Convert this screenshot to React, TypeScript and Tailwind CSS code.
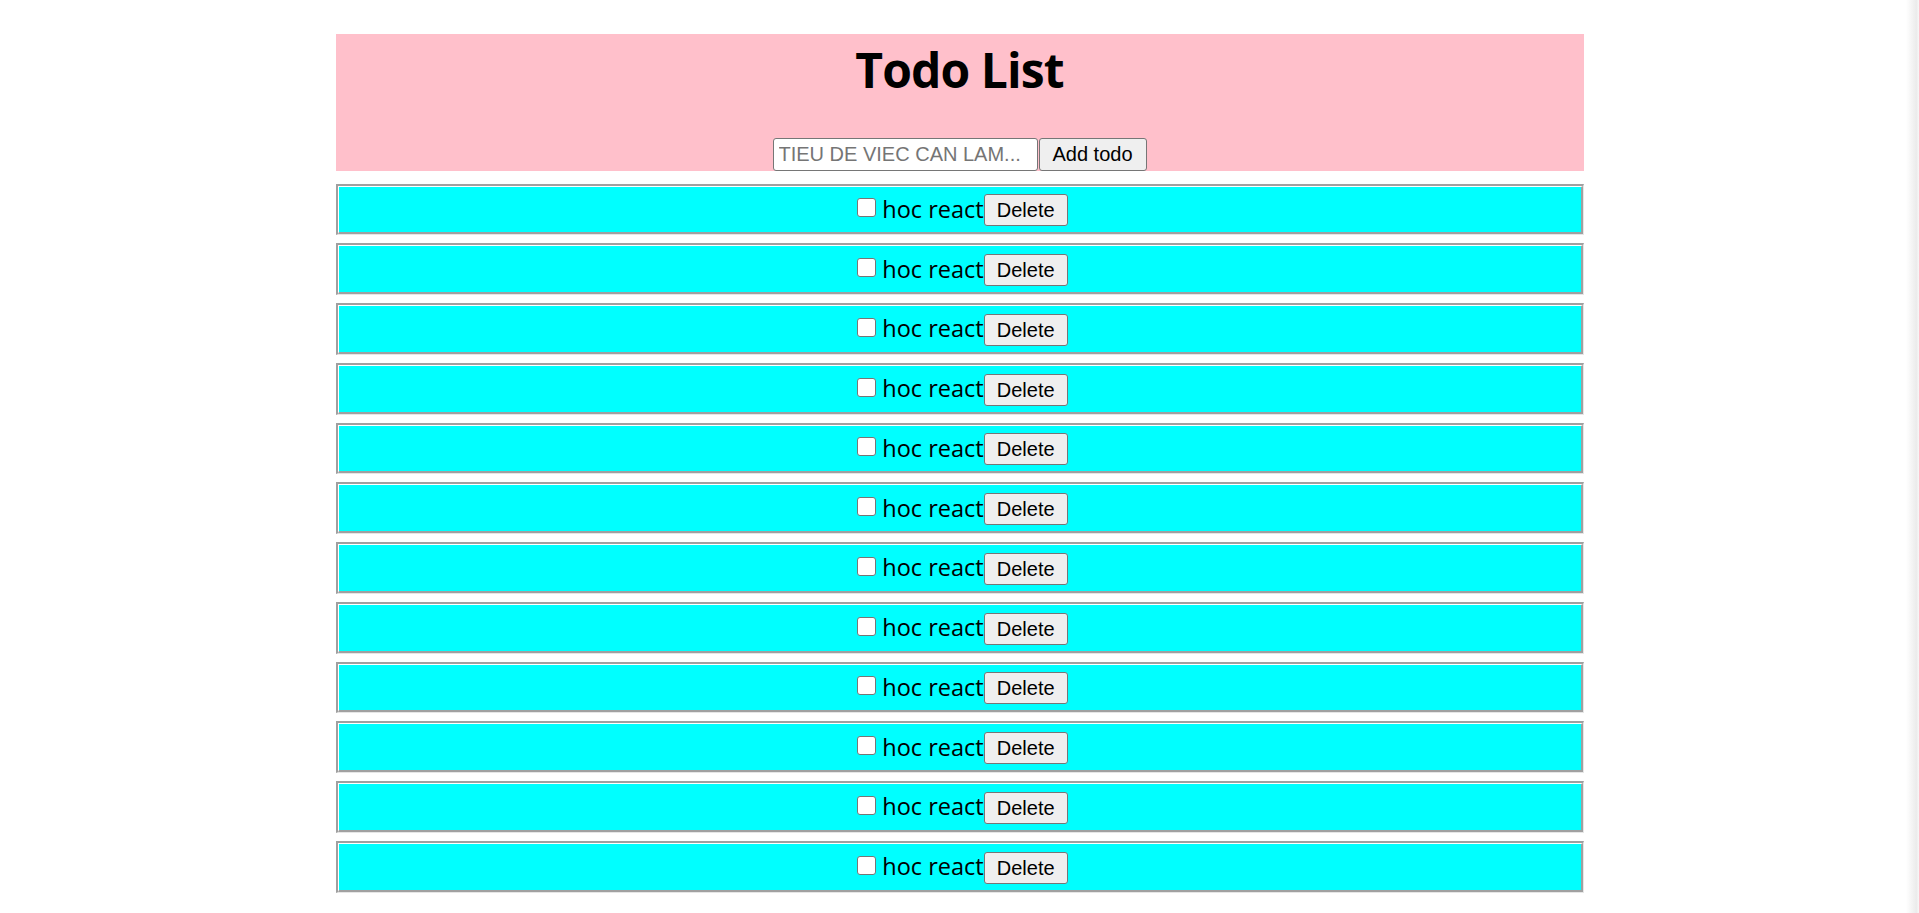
import React, { useState } from "react";

type Todo = { id: number; title: string; done: boolean };

const initialTodos: Todo[] = Array.from({ length: 12 }, (_, i) => ({
  id: i + 1,
  title: "hoc react",
  done: false,
}));

function TodoRow({ todo, onToggle, onDelete }: { todo: Todo; onToggle: () => void; onDelete: () => void }) {
  return (
    // groove-like frame: dark outer top/left, light outer bottom/right
    <div className="h-[51.75px] border-t-2 border-l-2 border-b border-r border-t-[#a0a0a0] border-l-[#a0a0a0] border-b-[#e6e6e6] border-r-[#e6e6e6]">
      <div className="h-full border-t border-l border-b-2 border-r-2 border-t-white border-l-white border-b-[#a0a0a0] border-r-[#a0a0a0] bg-[#00ffff] flex items-center justify-center">
        <input
          type="checkbox"
          checked={todo.done}
          onChange={onToggle}
          className="appearance-none w-[19px] h-[19px] ml-[6px] mr-[6px] mb-[3px] border-[1.5px] border-[#767676] rounded-[3px] bg-white checked:bg-[#0075ff]"
        />
        <span className="text-[23.5px] text-black">{todo.title}</span>
        <button
          onClick={onDelete}
          className="w-[84px] h-[32px] mt-[2px] bg-[#efefef] border-[1.5px] border-[#767676] rounded-[3px] text-[20px] text-black font-['Liberation_Sans',Arial,sans-serif]"
        >
          Delete
        </button>
      </div>
    </div>
  );
}

export default function App() {
  const [todos, setTodos] = useState<Todo[]>(initialTodos);
  const [title, setTitle] = useState("");

  const addTodo = () => {
    if (!title.trim()) return;
    setTodos([...todos, { id: Date.now(), title, done: false }]);
    setTitle("");
  };

  return (
    <div className="min-h-screen bg-white font-['Open_Sans','Noto_Sans',sans-serif] text-black">
      <div className="mx-auto w-[1248px] pt-[34px] pb-[20px]">
        <div className="h-[137px] bg-[#ffc0cb] flex flex-col items-center">
          <h1 className="mt-[8px] text-[48px] leading-[56px] font-bold tracking-[-0.9px]">Todo List</h1>
          <div className="mt-auto flex">
            <input
              value={title}
              onChange={(e) => setTitle(e.target.value)}
              placeholder="TIEU DE VIEC CAN LAM..."
              className="w-[265px] h-[33.5px] border-[1.5px] border-[#767676] rounded-[3px] bg-white px-[5px] text-[20px] font-['Liberation_Sans',Arial,sans-serif] placeholder:text-[#757575] outline-none"
            />
            <button
              onClick={addTodo}
              className="w-[108px] h-[33.5px] ml-[1px] bg-[#efefef] border-[1.5px] border-[#767676] rounded-[3px] text-[20px] font-['Liberation_Sans',Arial,sans-serif]"
            >
              Add todo
            </button>
          </div>
        </div>

        <div className="mt-[12.5px] flex flex-col gap-[8px]">
          {todos.map((t) => (
            <TodoRow
              key={t.id}
              todo={t}
              onToggle={() => setTodos(todos.map((x) => (x.id === t.id ? { ...x, done: !x.done } : x)))}
              onDelete={() => setTodos(todos.filter((x) => x.id !== t.id))}
            />
          ))}
        </div>
      </div>

      {/* overlay scrollbar shadow on the right edge */}
      <div className="fixed top-0 right-0 h-full w-[13px] bg-linear-to-r from-transparent via-[#ebebeb] via-80% to-[#f8f8f8] pointer-events-none" />
    </div>
  );
}
